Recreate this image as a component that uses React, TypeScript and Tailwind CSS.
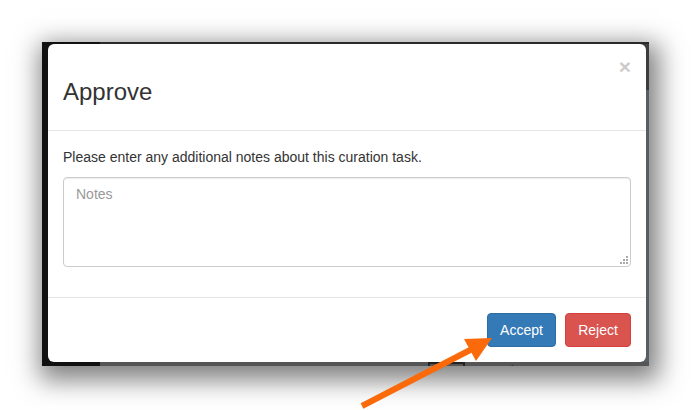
import React from 'react';

function ResizeDots() {
  // dotted grip in the textarea corner
  const dots = [
    [8, 2],
    [5, 5],
    [8, 5],
    [2, 8],
    [5, 8],
    [8, 8],
  ];
  return (
    <svg width="11" height="11" viewBox="0 0 11 11" className="absolute right-[2px] bottom-[2px]">
      {dots.map(([x, y], i) => (
        <rect key={i} x={x} y={y} width="2" height="2" fill="#a8a8a8" />
      ))}
    </svg>
  );
}

function Arrow() {
  return (
    <svg width="691" height="410" viewBox="0 0 691 410" className="absolute left-0 top-0 pointer-events-none">
      <line x1="362" y1="406" x2="474" y2="348" stroke="#fa6a0a" strokeWidth="6" />
      <polygon points="492,338 464,339 476,361" fill="#fa6a0a" />
    </svg>
  );
}

export default function App() {
  return (
    <div
      className="relative w-[691px] h-[410px] bg-white overflow-hidden"
      style={{ fontFamily: '"Liberation Sans", Arial, sans-serif' }}
    >
      <div className="absolute left-[42px] top-[42px] w-[607px] h-[324px] flex bg-[#4f4f4f] shadow-[4px_8px_24px_6px_rgba(0,0,0,0.5)]">
        {/* page behind the backdrop */}
        <div className="w-[58px] h-full bg-[#111]" />
        <div className="flex-1 flex flex-col">
          <div className="h-[48px] bg-[#3c3c3c] border-t-2 border-[#2a2a2a]" />
          <div className="flex-1 bg-[#575e63]" />
          <div className="h-[4px] bg-[#555] flex items-start overflow-hidden">
            <div className="ml-[328px] w-[37px] h-[8px] border-x-2 border-t-2 border-[#222]" />
            <div className="ml-[13px] mt-[1px] text-[15px] leading-none text-[#263040]">Headroom</div>
          </div>
        </div>

        {/* modal */}
        <div className="absolute left-[6px] top-[2px] w-[598px] h-[318px] bg-white rounded-[6px] flex flex-col text-[#333]">
          <div className="relative h-[87px] border-b border-[#e5e5e5] px-[15px] pt-[35px]">
            <h4 className="text-[24px] leading-[26px] text-[#333]">Approve</h4>
            <span className="absolute right-[15px] top-[12px] text-[21px] leading-none font-bold text-black opacity-20">
              ×
            </span>
          </div>
          <div className="px-[15px] pt-[16px] pb-[30px]">
            <p className="text-[14px] leading-[20px]">Please enter any additional notes about this curation task.</p>
            <div className="relative mt-[10px]">
              <textarea
                placeholder="Notes"
                className="block w-full h-[90px] resize-none rounded-[4px] border border-[#ccc] px-[12px] py-[6px] text-[14px] leading-[20px] placeholder:text-[#999] shadow-[inset_0_1px_1px_rgba(0,0,0,0.075)] outline-none"
              />
              <ResizeDots />
            </div>
          </div>
          <div className="flex-1 border-t border-[#e5e5e5] px-[15px] pt-[15px] flex justify-end gap-[9px] items-start">
            <button className="h-[34px] w-[69px] rounded-[4px] border border-[#2e6da4] bg-[#337ab7] text-white text-[14px]">
              Accept
            </button>
            <button className="h-[34px] w-[66px] rounded-[4px] border border-[#d43f3a] bg-[#d9534f] text-white text-[14px]">
              Reject
            </button>
          </div>
        </div>
      </div>
      <Arrow />
    </div>
  );
}
